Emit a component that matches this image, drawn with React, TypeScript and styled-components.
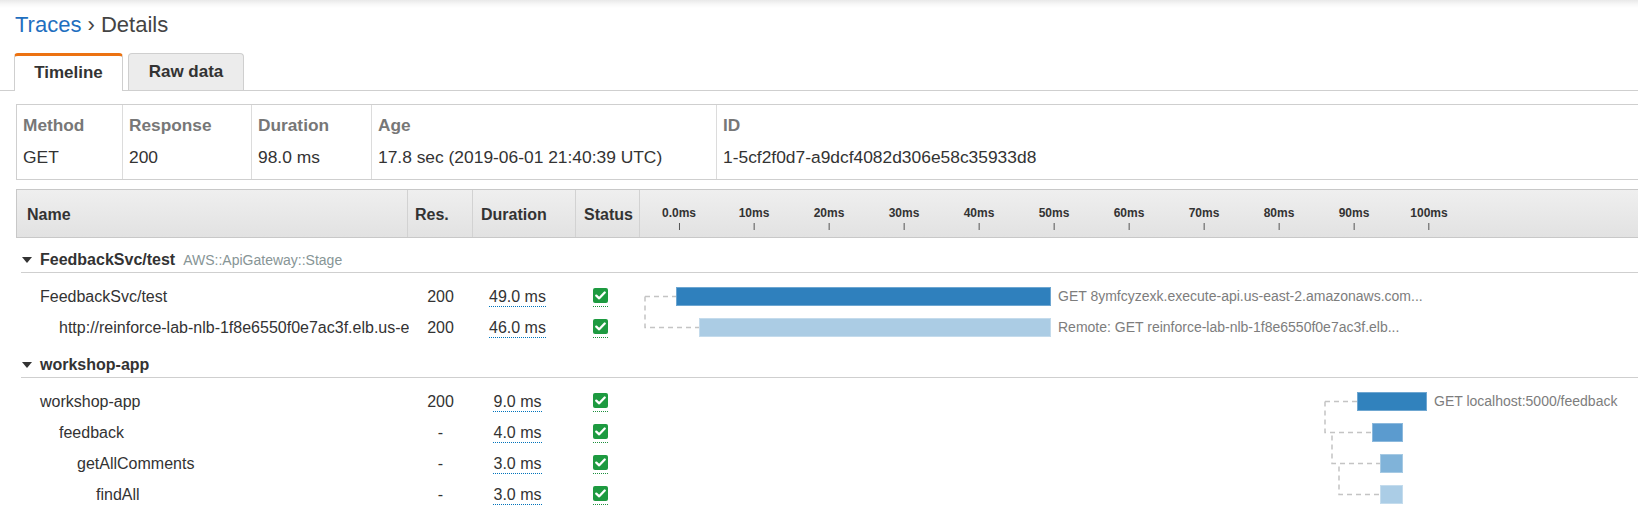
import React from 'react';
import styled, { createGlobalStyle } from 'styled-components';

const GlobalStyle = createGlobalStyle`
  html, body {
    margin: 0;
    padding: 0;
    background: #fff;
    overflow: hidden;
  }
  body {
    font-family: "Liberation Sans", Arial, sans-serif;
    color: #333;
  }
  * {
    box-sizing: border-box;
  }
`;

const Page = styled.div`
  width: 1680px;
  padding-top: 10px;
  background: linear-gradient(#e9e9e9 0, #f7f7f7 4px, #fff 8px) no-repeat;
`;

const Breadcrumb = styled.div`
  padding-left: 15px;
  font-size: 22px;
  line-height: 30px;
  color: #444;
`;

const Crumb = styled.a`
  color: #1f6fbf;
  text-decoration: none;
`;

const TabBar = styled.div`
  display: flex;
  align-items: flex-end;
  gap: 5px;
  height: 38px;
  margin-top: 13px;
  padding-left: 14px;
  border-bottom: 1px solid #cfcfcf;
`;

const Tab = styled.div<{ $active?: boolean }>`
  display: flex;
  align-items: center;
  justify-content: center;
  width: ${(p) => (p.$active ? 109 : 116)}px;
  height: ${(p) => (p.$active ? 38 : 37)}px;
  margin-bottom: ${(p) => (p.$active ? -1 : 0)}px;
  border: 1px solid #cfcfcf;
  border-bottom: none;
  border-top: ${(p) => (p.$active ? '3px solid #ec7211' : '1px solid #cfcfcf')};
  border-radius: 4px 4px 0 0;
  background: ${(p) => (p.$active ? '#fff' : '#ececec')};
  font-size: 17px;
  font-weight: 700;
  color: #333;
  padding-bottom: ${(p) => (p.$active ? 2 : 0)}px;
`;

const Summary = styled.div`
  display: flex;
  margin: 13px 0 0 16px;
  height: 76px;
  border: 1px solid #cfcfcf;
`;

const SummaryCol = styled.div<{ $w?: number }>`
  ${(p) => (p.$w ? `width: ${p.$w}px; flex: none;` : 'flex: 1;')}
  padding: 6px 6px 0;
  & + & {
    border-left: 1px solid #dcdcdc;
  }
`;

const SummaryLabel = styled.div`
  font-size: 17.3px;
  font-weight: 700;
  line-height: 28px;
  color: #777;
`;

const SummaryValue = styled.div`
  margin-top: 4px;
  font-size: 17.4px;
  line-height: 28px;
  color: #333;
`;

const Table = styled.div`
  margin: 9px 0 0 16px;
`;

const HeaderRow = styled.div`
  display: flex;
  height: 49px;
  border: 1px solid #c8c8c8;
  border-right: none;
  background: linear-gradient(#efefef, #e2e2e2);
`;

const HeaderCell = styled.div<{ $w?: number; $pad?: number }>`
  ${(p) => (p.$w ? `width: ${p.$w}px; flex: none;` : 'flex: 1;')}
  display: flex;
  align-items: center;
  padding: 3px 0 0 ${(p) => p.$pad ?? 8}px;
  font-size: 16px;
  font-weight: 700;
  color: #333;
  & + & {
    border-left: 1px solid #d2d2d2;
  }
`;

const Axis = styled.div`
  position: relative;
  flex: 1;
  height: 100%;
  border-left: 1px solid #d2d2d2;
`;

const Tick = styled.div`
  position: absolute;
  top: 16px;
  transform: translateX(-50%);
  display: flex;
  flex-direction: column;
  align-items: center;
  font-size: 12px;
  font-weight: 700;
  line-height: 14px;
  color: #333;

  &::after {
    content: '';
    width: 1px;
    height: 7px;
    margin-top: 3px;
    background: #555;
  }
`;

const GroupHeader = styled.div`
  display: flex;
  align-items: center;
  height: 35px;
  margin-left: 5px;
  padding: 10px 0 0 1px;
  border-bottom: 1px solid #cfcfcf;
`;

const Caret = styled.span`
  width: 0;
  height: 0;
  border-left: 5px solid transparent;
  border-right: 5px solid transparent;
  border-top: 6px solid #333;
  margin-right: 8px;
`;

const GroupName = styled.span`
  font-size: 16px;
  font-weight: 700;
  color: #333;
`;

const GroupType = styled.span`
  margin-left: 8px;
  font-size: 14px;
  color: #879596;
`;

const GroupBody = styled.div`
  position: relative;
  padding-top: 8px;
`;

const Row = styled.div`
  display: flex;
  align-items: center;
  height: 31px;
  font-size: 16px;
  color: #333;
`;

const NameCell = styled.div<{ $depth: number }>`
  width: 393px;
  flex: none;
  padding-left: ${(p) => 24 + Math.round(p.$depth * 18.7)}px;
  white-space: nowrap;
  overflow: hidden;
  text-overflow: clip;
`;

const ResCell = styled.div`
  width: 63px;
  flex: none;
  text-align: center;
`;

const DurCell = styled.div`
  width: 103px;
  flex: none;
  padding-right: 12px;
  text-align: center;
`;

const DurLink = styled.span`
  border-bottom: 1px dotted #0073bb;
  padding-bottom: 1px;
`;

const StatusCell = styled.div`
  width: 64px;
  flex: none;
  padding: 2px 0 0 18px;
  display: flex;
`;

const StatusOk = styled.span`
  display: flex;
  flex-direction: column;
  width: 15px;

  &::after {
    content: '';
    margin-top: 3px;
    border-bottom: 1px dotted #1d8f3c;
  }
`;

const CheckBox = styled.span`
  display: flex;
  align-items: center;
  justify-content: center;
  width: 15px;
  height: 15px;
  border-radius: 2px;
  background: #1d9a40;
`;

const Track = styled.div`
  position: relative;
  flex: 1;
  height: 100%;
`;

const Bar = styled.div`
  position: absolute;
  top: 6px;
  height: 19px;
  box-shadow: inset 0 0 0 1px rgba(255, 255, 255, 0.3);
`;

const BarLabel = styled.span`
  position: absolute;
  top: 7px;
  font-size: 14px;
  line-height: 17px;
  color: #7d7d7d;
  white-space: nowrap;
`;

const Connectors = styled.svg`
  position: absolute;
  top: 0;
  left: 623px;
  overflow: visible;
  pointer-events: none;
`;

type Span = {
  name: string;
  depth: number;
  res: string;
  dur: string;
  left: number;
  width: number;
  color: string;
  label?: string;
};

type Group = {
  name: string;
  type?: string;
  base: number;
  spans: Span[];
};

const groups: Group[] = [
  {
    name: 'FeedbackSvc/test',
    type: 'AWS::ApiGateway::Stage',
    base: 6,
    spans: [
      {
        name: 'FeedbackSvc/test',
        depth: 0,
        res: '200',
        dur: '49.0 ms',
        left: 37,
        width: 375,
        color: '#2f80bd',
        label: 'GET 8ymfcyzexk.execute-api.us-east-2.amazonaws.com...',
      },
      {
        name: 'http://reinforce-lab-nlb-1f8e6550f0e7ac3f.elb.us-east-2.amazonaws.com',
        depth: 1,
        res: '200',
        dur: '46.0 ms',
        left: 60,
        width: 352,
        color: '#abcce4',
        label: 'Remote: GET reinforce-lab-nlb-1f8e6550f0e7ac3f.elb...',
      },
    ],
  },
  {
    name: 'workshop-app',
    base: 686,
    spans: [
      {
        name: 'workshop-app',
        depth: 0,
        res: '200',
        dur: '9.0 ms',
        left: 718,
        width: 70,
        color: '#3182bd',
        label: 'GET localhost:5000/feedback',
      },
      { name: 'feedback', depth: 1, res: '-', dur: '4.0 ms', left: 733, width: 31, color: '#5b9bcf' },
      { name: 'getAllComments', depth: 2, res: '-', dur: '3.0 ms', left: 741, width: 23, color: '#80b3d9' },
      { name: 'findAll', depth: 3, res: '-', dur: '3.0 ms', left: 741, width: 23, color: '#abcde6' },
    ],
  },
];

const ticks = ['0.0ms', '10ms', '20ms', '30ms', '40ms', '50ms', '60ms', '70ms', '80ms', '90ms', '100ms'];

const ROW_H = 31;
const rowY = (i: number) => 8 + ROW_H * i + 15.5;

const Check = () => (
  <StatusOk>
    <CheckBox>
      <svg width="11" height="9" viewBox="0 0 11 9">
        <path d="M1.3 4.6 L4.2 7.3 L9.7 1.5" fill="none" stroke="#fff" strokeWidth="2.3" strokeLinecap="round" strokeLinejoin="round" />
      </svg>
    </CheckBox>
  </StatusOk>
);

const GroupLinks = ({ group }: { group: Group }) => {
  const { spans, base } = group;
  const paths = [`M${base} ${rowY(0)} H${spans[0].left}`];
  spans.forEach((s, i) => {
    if (i === 0) return;
    let parent = i - 1;
    while (parent > 0 && spans[parent].depth >= s.depth) parent--;
    const x = base + 7 * (s.depth - 1);
    paths.push(`M${x} ${rowY(parent) + (s.depth > 1 ? 3 : 0)} V${rowY(i)} H${s.left}`);
  });
  return (
    <Connectors width="900" height={8 + ROW_H * spans.length}>
      {paths.map((d) => (
        <path key={d} d={d} fill="none" stroke="#c4c4c4" strokeWidth="1.5" strokeDasharray="5 4" />
      ))}
    </Connectors>
  );
};

export default function App() {
  return (
    <Page>
      <GlobalStyle />
      <Breadcrumb>
        <Crumb href="#">Traces</Crumb> › Details
      </Breadcrumb>

      <TabBar>
        <Tab $active>Timeline</Tab>
        <Tab>Raw data</Tab>
      </TabBar>

      <Summary>
        <SummaryCol $w={105}>
          <SummaryLabel>Method</SummaryLabel>
          <SummaryValue>GET</SummaryValue>
        </SummaryCol>
        <SummaryCol $w={129}>
          <SummaryLabel>Response</SummaryLabel>
          <SummaryValue>200</SummaryValue>
        </SummaryCol>
        <SummaryCol $w={120}>
          <SummaryLabel>Duration</SummaryLabel>
          <SummaryValue>98.0 ms</SummaryValue>
        </SummaryCol>
        <SummaryCol $w={345}>
          <SummaryLabel>Age</SummaryLabel>
          <SummaryValue>17.8 sec (2019-06-01 21:40:39 UTC)</SummaryValue>
        </SummaryCol>
        <SummaryCol>
          <SummaryLabel>ID</SummaryLabel>
          <SummaryValue>1-5cf2f0d7-a9dcf4082d306e58c35933d8</SummaryValue>
        </SummaryCol>
      </Summary>

      <Table>
        <HeaderRow>
          <HeaderCell $w={390} $pad={10}>Name</HeaderCell>
          <HeaderCell $w={65} $pad={7}>Res.</HeaderCell>
          <HeaderCell $w={103}>Duration</HeaderCell>
          <HeaderCell $w={64}>Status</HeaderCell>
          <Axis>
            {ticks.map((t, i) => (
              <Tick key={t} style={{ left: 39 + 75 * i }}>
                {t}
              </Tick>
            ))}
          </Axis>
        </HeaderRow>

        {groups.map((g) => (
          <React.Fragment key={g.name}>
            <GroupHeader>
              <Caret />
              <GroupName>{g.name}</GroupName>
              {g.type && <GroupType>{g.type}</GroupType>}
            </GroupHeader>
            <GroupBody>
              <GroupLinks group={g} />
              {g.spans.map((s) => (
                <Row key={s.name}>
                  <NameCell $depth={s.depth}>{s.name}</NameCell>
                  <ResCell>{s.res}</ResCell>
                  <DurCell>
                    <DurLink>{s.dur}</DurLink>
                  </DurCell>
                  <StatusCell>
                    <Check />
                  </StatusCell>
                  <Track>
                    <Bar style={{ left: s.left, width: s.width, background: s.color }} />
                    {s.label && <BarLabel style={{ left: s.left + s.width + 7 }}>{s.label}</BarLabel>}
                  </Track>
                </Row>
              ))}
            </GroupBody>
          </React.Fragment>
        ))}
      </Table>
    </Page>
  );
}
